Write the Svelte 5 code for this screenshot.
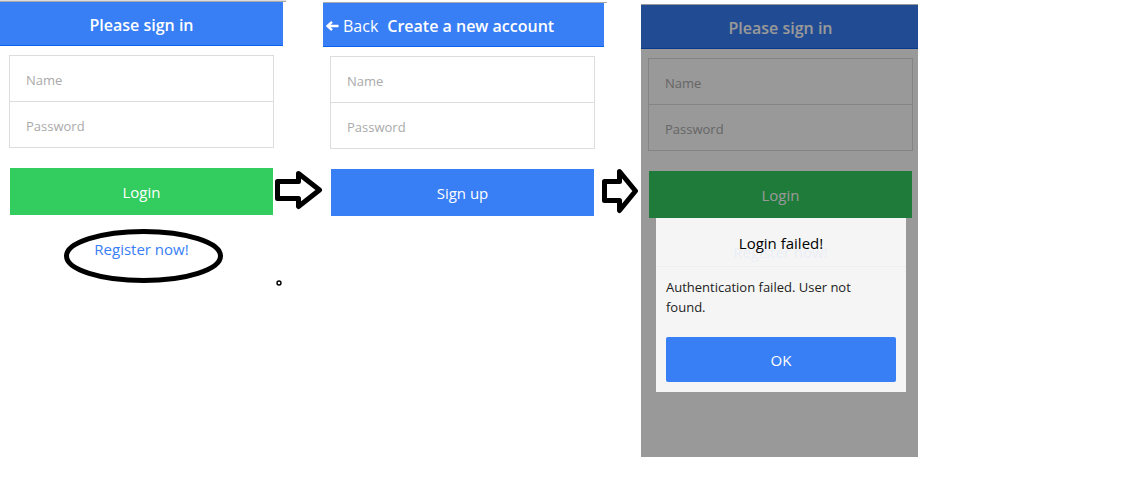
<script>
  let name = $state('');
  let password = $state('');
  let newName = $state('');
  let newPassword = $state('');
</script>

{#snippet fields(prefix)}
  <div class="list">
    <label class="item" for="{prefix}-name">
      {#if prefix === 'signup'}
        <input id="{prefix}-name" type="text" placeholder="Name" aria-label="Name" bind:value={newName} />
      {:else}
        <input id="{prefix}-name" type="text" placeholder="Name" aria-label="Name" bind:value={name} />
      {/if}
    </label>
    <label class="item" for="{prefix}-password">
      {#if prefix === 'signup'}
        <input id="{prefix}-password" type="password" placeholder="Password" aria-label="Password" bind:value={newPassword} />
      {:else}
        <input id="{prefix}-password" type="password" placeholder="Password" aria-label="Password" bind:value={password} />
      {/if}
    </label>
  </div>
{/snippet}

<main class="flow">
  <section class="screen login">
    <header class="bar"><h1>Please sign in</h1></header>
    <form class="content">
      {@render fields('login')}
      <button class="button balanced" type="button">Login</button>
      <a class="register" href="#register">Register now!</a>
    </form>
    <svg class="ring" width="160" height="56" viewBox="0 0 160 56" aria-hidden="true">
      <ellipse cx="79.5" cy="28" rx="77" ry="24.5" fill="none" stroke="#000" stroke-width="5" />
    </svg>
  </section>

  <div class="step first">
    <svg width="50" height="40" viewBox="0 0 50 40" aria-hidden="true">
      <path d="M2.5 11.5H23.5V3.5L44.5 20L23.5 36.5V28.5H2.5Z" fill="#fff" stroke="#000" stroke-width="5" stroke-linejoin="round" />
    </svg>
    <svg class="dot" width="8" height="8" viewBox="0 0 8 8" aria-hidden="true">
      <circle cx="4" cy="4" r="2" fill="#fff" stroke="#000" stroke-width="1.4" />
    </svg>
  </div>

  <section class="screen signup">
    <header class="bar">
      <button class="back" type="button">
        <svg width="13" height="12" viewBox="0 0 13 12" aria-hidden="true">
          <path d="M12.5 6H2M6 1.8L1.6 6L6 10.2" fill="none" stroke="#fff" stroke-width="2.4" />
        </svg>
        Back
      </button>
      <h1>Create a new account</h1>
    </header>
    <form class="content">
      {@render fields('signup')}
      <button class="button positive" type="button">Sign up</button>
    </form>
  </section>

  <div class="step second">
    <svg width="40" height="46" viewBox="0 0 40 46" aria-hidden="true">
      <path d="M2.5 13.5H17.5V3.5L33.5 23L17.5 42.5V32.5H2.5Z" fill="#fff" stroke="#000" stroke-width="5" stroke-linejoin="round" />
    </svg>
  </div>

  <section class="screen failed">
    <header class="bar"><h1>Please sign in</h1></header>
    <form class="content">
      {@render fields('failed')}
      <button class="button balanced" type="button">Login</button>
      <a class="register" href="#register">Register now!</a>
    </form>
    <div class="backdrop">
      <div class="popup" role="alertdialog" aria-labelledby="popup-title" aria-describedby="popup-text">
        <h2 id="popup-title">Login failed!</h2>
        <p id="popup-text">Authentication failed. User not found.</p>
        <button class="ok" type="button">OK</button>
      </div>
    </div>
  </section>
</main>

<style>
  :global(body) {
    background: #fff;
    font-family: 'Open Sans', 'Noto Sans', sans-serif;
  }
  .flow {
    display: grid;
    grid-template-columns: 283fr 40fr 281fr 37fr 277fr 209fr;
    align-items: start;
  }
  button, input { font-family: inherit; }
  .screen { position: relative; box-sizing: border-box; min-width: 0; }
  .login { padding-top: 2px; }
  .signup { margin-top: 2px; padding-top: 1px; }
  .failed { margin-top: 4px; padding: 1px 0 193px; }
  /* window edge above the header, slightly wider than the screen */
  .login::before,
  .signup::before {
    content: '';
    position: absolute;
    top: 0;
    left: 0;
    right: -3px;
    height: 1px;
    background: #aaa;
  }
  .login::before { background: #ddd; border-bottom: 1px solid #aaa; }
  .bar {
    box-sizing: border-box;
    height: 44px;
    padding-top: 2px;
    display: flex;
    align-items: center;
    justify-content: center;
    background: #387ef5;
    border-bottom: 1px solid #0c60ee;
    color: #fff;
  }
  .failed .bar { padding-left: 2px; }
  h1 {
    margin: 0;
    font-size: 16px;
    line-height: 24px;
    font-weight: 600;
    white-space: nowrap;
  }
  .signup .bar { justify-content: flex-start; gap: 9px; padding-left: 3px; }
  .back {
    display: flex;
    align-items: center;
    gap: 4px;
    padding: 0;
    border: 0;
    background: none;
    color: #fff;
    font-size: 16px;
    line-height: 24px;
  }
  .content {
    display: flex;
    flex-direction: column;
    padding: 9px 9px 0;
  }
  .signup .content { padding-left: 7px; }
  .failed .content { padding: 9px 5px 0 7px; }
  .list { border: 1px solid #ddd; }
  .item { display: block; height: 45px; }
  .item + .item { border-top: 1px solid #ddd; }
  input {
    box-sizing: border-box;
    width: 100%;
    height: 100%;
    padding: 2px 16px 0;
    border: 0;
    outline: 0;
    background: none;
    font-size: 13px;
    color: #111;
    display: block;
  }
  input::placeholder { color: #aaa; opacity: 1; }
  .button {
    height: 47px;
    margin: 20px 1px 0;
    padding: 0;
    border: 0;
    color: #fff;
    font-size: 15px;
    line-height: 24px;
  }
  .balanced { background: #33cd5f; }
  .positive { background: #387ef5; }
  .register {
    align-self: center;
    margin-top: 22px;
    color: #387ef5;
    font-size: 15px;
    line-height: 24px;
    text-decoration: none;
  }
  .ring {
    position: absolute;
    left: 64px;
    top: 228px;
  }
  .step { display: flex; flex-direction: column; min-width: 0; }
  .first { margin: 170px 0 0 -8px; }
  .second { margin: 168px 0 0 -2px; }
  .step svg { flex: none; }
  .dot { margin-top: 69px; }
  .backdrop {
    position: absolute;
    inset: 0;
    padding: 214px 12px 0 15px;
    background: rgba(0, 0, 0, 0.4);
  }
  .popup {
    background: rgba(255, 255, 255, 0.9);
    display: flex;
    flex-direction: column;
  }
  h2 {
    margin: 0;
    padding: 13px 0 11px;
    border-bottom: 1px solid #eee;
    text-align: center;
    font-size: 15px;
    line-height: 24px;
    font-weight: 500;
    color: #000;
  }
  p {
    margin: 0;
    padding: 10px 24px 20px 10px;
    font-size: 13px;
    line-height: 20px;
    color: #222;
  }
  .ok {
    height: 45px;
    margin: 0 10px 10px;
    padding: 0;
    border: 0;
    border-radius: 2px;
    background: #387ef5;
    color: #fff;
    font-size: 15px;
    font-weight: 500;
  }
</style>
